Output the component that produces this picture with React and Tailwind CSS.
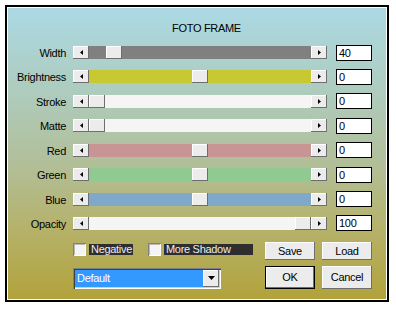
import React from 'react';

const rows = [
    { label: 'Width', value: '40', track: 'bg-[#808080]', thumb: 17 },
    { label: 'Brightness', value: '0', track: 'bg-[#c8c832]', thumb: 103 },
    { label: 'Stroke', value: '0', track: 'bg-[#f5f5f5]', thumb: 0 },
    { label: 'Matte', value: '0', track: 'bg-[#f5f5f5]', thumb: 0 },
    { label: 'Red', value: '0', track: 'bg-[#c99494]', thumb: 103 },
    { label: 'Green', value: '0', track: 'bg-[#90c991]', thumb: 103 },
    { label: 'Blue', value: '0', track: 'bg-[#7fa8ca]', thumb: 103 },
    { label: 'Opacity', value: '100', track: 'bg-[#f5f5f5]', thumb: 206 },
];

const raised = 'bg-[#ececec] shadow-[inset_-1px_-1px_0_#6e6e6e,inset_1px_1px_0_#ffffff]';

const ArrowBtn = ({ dir }) => (
    <div className={`w-[16px] h-[13px] flex items-center justify-center ${raised}`}>
        <svg width="3" height="5" viewBox="0 0 3 5">
            {dir === 'left'
                ? <path d="M3 0 L0 2.5 L3 5 Z" fill="#000" />
                : <path d="M0 0 L3 2.5 L0 5 Z" fill="#000" />}
        </svg>
    </div>
);

const Slider = ({ track, thumb }) => (
    <div className="flex w-[254px] h-[13px]">
        <ArrowBtn dir="left" />
        <div className={`relative flex-1 ${track}`}>
            {/* thumb sits over the track */}
            <div className={`absolute top-0 w-[16px] h-[13px] ${raised}`} style={{ left: thumb }} />
        </div>
        <ArrowBtn dir="right" />
    </div>
);

const Check = ({ label, width }) => (
    <div className="flex items-center">
        <div className="w-[13px] h-[13px] bg-[#f4f4f4] shadow-[inset_1px_1px_0_#808080,inset_-1px_-1px_0_#ffffff,inset_2px_2px_0_#b8b8b8]" />
        <div className={`ml-[3px] h-[11px] bg-[#2e2e2e] text-[#ececec] leading-[11px] pl-[2px] ${width}`}>{label}</div>
    </div>
);

const Btn = ({ children, h, def }) => (
    <div className={`w-[50px] ${h} flex items-center justify-center ${raised} ${def ? 'outline outline-1 outline-black -outline-offset-1 shadow-[inset_-2px_-2px_0_#6e6e6e,inset_2px_2px_0_#ffffff]' : ''}`}>
        {children}
    </div>
);

export default function App() {
    return (
        <div className="w-[396px] h-[309px] bg-white font-['Liberation_Sans',Arial,sans-serif] text-[11px] tracking-[-0.3px] text-black pt-[5px] pl-[5px]">
            <div className="w-[384px] h-[297px] border-2 border-black bg-white p-px">
                <div className="w-full h-full bg-[linear-gradient(to_bottom,#abd9e4_0%,#aecbbc_30%,#b2be96_55%,#b5b26c_75%,#b1a23b_100%)] pt-[14px]">
                    <div className="pl-[164px] leading-[13px]">FOTO FRAME</div>

                    <div className="mt-[11px] flex flex-col gap-[11.43px]">
                        {rows.map((r) => (
                            <div key={r.label} className="flex items-center h-[13px]">
                                <div className="w-[58px] text-right leading-[13px] mt-[2px]">{r.label}</div>
                                <div className="ml-[7px]">
                                    <Slider track={r.track} thumb={r.thumb} />
                                </div>
                                <div className="ml-[9px] w-[36px] h-[16px] shrink-0 border border-black bg-white pl-[2px] leading-[15px]">{r.value}</div>
                            </div>
                        ))}
                    </div>

                    <div className="flex mt-[12px]">
                        <div className="ml-[65px] w-[192px]">
                            <div className="flex items-center pt-px gap-[15px]">
                                <Check label="Negative" width="w-[44px]" />
                                <Check label="More Shadow" width="w-[89px] ml-[2px]" />
                            </div>
                            <div className="mt-[12px] w-[148px] h-[21px] flex p-[2px] bg-white shadow-[inset_1px_1px_0_#808080,inset_2px_2px_0_#404040,inset_-1px_-1px_0_#ffffff,inset_-2px_-2px_0_#d4d0c8]">
                                <div className="flex-1 bg-[#3399ff] text-white pl-[2px] leading-[17px]">Default</div>
                                <div className={`w-[16px] h-[17px] flex items-center justify-center ${raised}`}>
                                    <svg width="7" height="4" viewBox="0 0 7 4">
                                        <path d="M0 0 L7 0 L3.5 4 Z" fill="#000" />
                                    </svg>
                                </div>
                            </div>
                        </div>
                        <div>
                            <div className="flex gap-[7px]">
                                <Btn h="h-[18px]">Save</Btn>
                                <Btn h="h-[18px]">Load</Btn>
                            </div>
                            <div className="flex gap-[7px] mt-[6px]">
                                <Btn h="h-[23px]" def>OK</Btn>
                                <Btn h="h-[23px]">Cancel</Btn>
                            </div>
                        </div>
                    </div>
                </div>
            </div>
        </div>
    );
}
